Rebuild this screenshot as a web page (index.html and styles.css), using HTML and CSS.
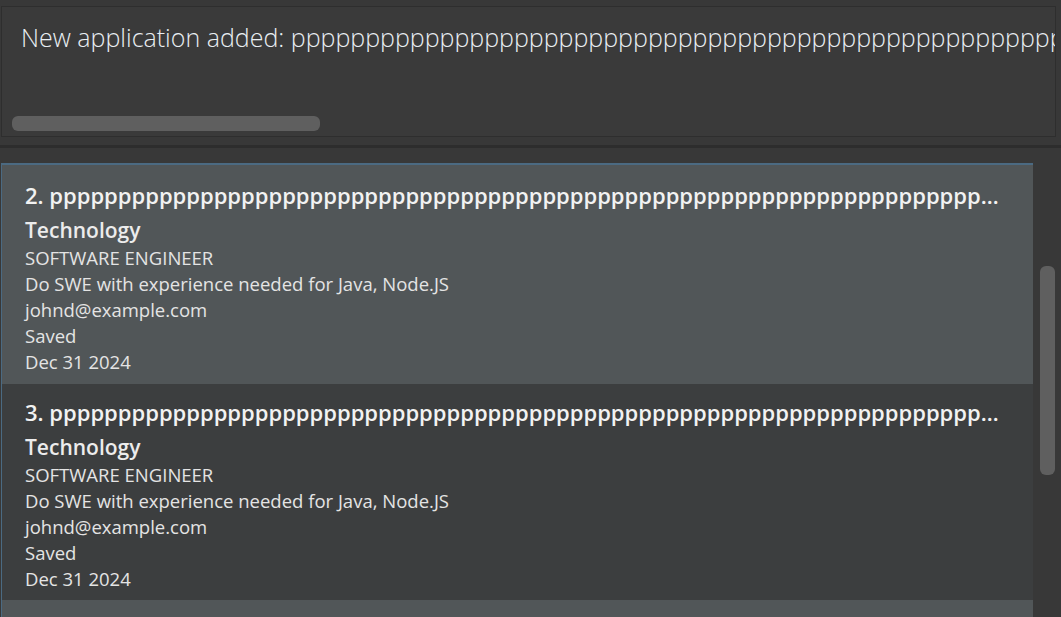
FILE: index.html
```html
<!DOCTYPE html>
<html>
<head>
<meta charset="utf-8">
<link rel="stylesheet" href="styles.css">
</head>
<body>
<div class="app">
  <div class="result-box">
    <div class="result-text">New application added: pppppppppppppppppppppppppppppppppppppppppppppppppppppppppppppppppppppppp</div>
    <div class="hbar"><div class="hthumb"></div></div>
  </div>
  <div class="separator"></div>
  <div class="list-area">
    <div class="list">
      <div class="cell even">
        <div class="title">2. pppppppppppppppppppppppppppppppppppppppppppppppppppppppppppppppppppppppppppppppppppppppppppp</div>
        <div class="industry">Technology</div>
        <div class="line">SOFTWARE ENGINEER</div>
        <div class="line">Do SWE with experience needed for Java, Node.JS</div>
        <div class="line">johnd@example.com</div>
        <div class="line">Saved</div>
        <div class="line">Dec 31 2024</div>
      </div>
      <div class="cell odd">
        <div class="title">3. pppppppppppppppppppppppppppppppppppppppppppppppppppppppppppppppppppppppppppppppppppppppppppp</div>
        <div class="industry">Technology</div>
        <div class="line">SOFTWARE ENGINEER</div>
        <div class="line">Do SWE with experience needed for Java, Node.JS</div>
        <div class="line">johnd@example.com</div>
        <div class="line">Saved</div>
        <div class="line">Dec 31 2024</div>
      </div>
      <div class="cell even"></div>
    </div>
    <div class="vtrack"><div class="vthumb"></div></div>
  </div>
</div>
</body>
</html>
```
FILE: styles.css
```css
html, body {
  margin: 0;
  padding: 0;
  background: #383838;
  width: 1061px;
  height: 617px;
  overflow: hidden;
  font-family: "Open Sans", "Noto Sans", sans-serif;
}
.app {
  display: flex;
  flex-direction: column;
  height: 617px;
}
.result-box {
  margin: 6px 5px 0 1px;
  height: 129px;
  border: 1px solid #2e2e2e;
  background: #3a3a3a;
  display: flex;
  flex-direction: column;
  overflow: hidden;
}
.result-text {
  color: #e9eef2;
  font-weight: 300;
  font-size: 25px;
  line-height: 30px;
  padding: 15px 0 0 19px;
  white-space: nowrap;
  overflow: hidden;
}
.hbar {
  margin-top: auto;
  padding: 0 0 5px 10px;
}
.hthumb {
  width: 308px;
  height: 15px;
  border-radius: 6px;
  background: #5f5f5f;
}
.separator {
  margin-top: 8px;
  height: 3px;
  background: #2d2d2d;
}
.list-area {
  margin-top: 15px;
  flex: 1;
  display: flex;
  min-height: 0;
}
.list {
  width: 1031px;
  margin-left: 1px;
  border-top: 2px solid #4b6a82;
  border-left: 1px solid #4b6a82;
  display: flex;
  flex-direction: column;
  overflow: hidden;
}
.cell {
  padding: 14px 24px 0 23px;
  height: 216px;
  flex-shrink: 0;
  box-sizing: border-box;
  color: #e4e4e4;
}
.cell.even {
  background: #515658;
  height: 219px;
  padding-top: 16px;
}
.cell.odd { background: #3c3e3f; }
.title {
  font-size: 22px;
  font-weight: 600;
  line-height: 28px;
  color: #f2f2f2;
  white-space: nowrap;
  overflow: hidden;
  text-overflow: ellipsis;
}
.industry {
  font-size: 21px;
  font-weight: 600;
  line-height: 30px;
  color: #ececec;
  margin-top: 6px;
}
.line {
  font-size: 18.5px;
  line-height: 26px;
}
.vtrack {
  flex: 1;
  display: flex;
  justify-content: center;
  padding-top: 103px;
}
.vthumb {
  width: 15px;
  height: 209px;
  border-radius: 6px;
  background: #5f5f5f;
}
```
